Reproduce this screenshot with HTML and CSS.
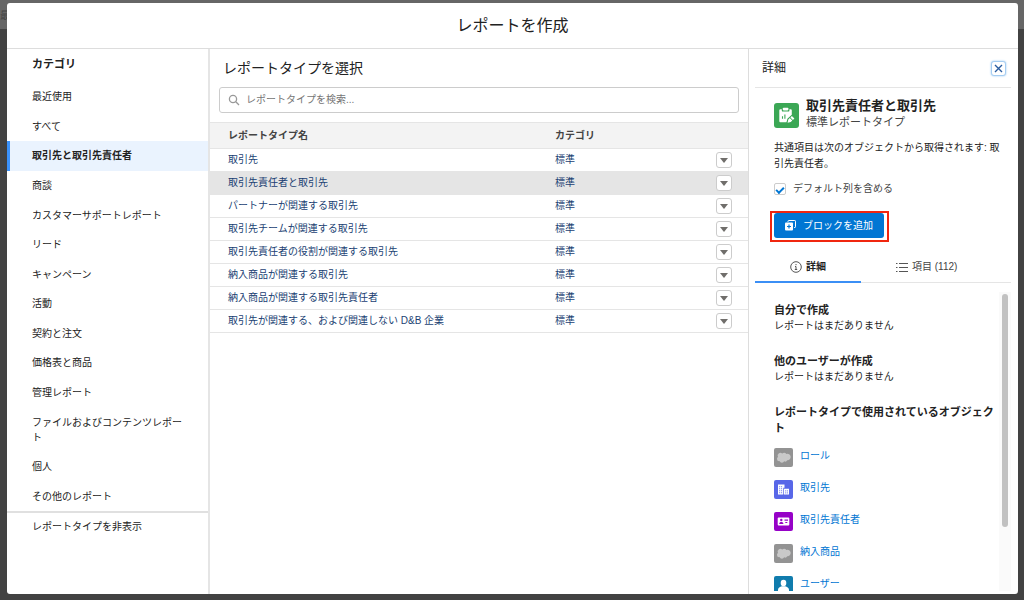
FILE: index.html
```html
<!DOCTYPE html>
<html lang="ja">
  <head>
    <meta charset="utf-8">
    <meta name="viewport" content="width=device-width, initial-scale=1.0">
    <title>レポートを作成</title>
    <link rel="stylesheet" href="styles.css">
  </head>
  <body>
    <svg class="sprite" aria-hidden="true">
      <symbol id="cloud" viewBox="0 0 19 19">
        <path d="M8.200 5.600a3 3 0 0 1 4.200.4 3.200 3.200 0 1 1 .8 6.200 2.200 2.200 0 0 1-3 1.100 2.500 2.500 0 0 1-4.600-.2 2.300 2.300 0 0 1-2.600-2.200 2.300 2.300 0 0 1 1-2A2.700 2.700 0 0 1 8.200 5.600z" fill="#c9c9c9"/>
      </symbol>
    </svg>

    <div class="backdrop-text" aria-hidden="true">最</div>

    <div class="modal" role="dialog" aria-labelledby="modalTitle">
      <header class="modal-header">
        <h1 id="modalTitle">レポートを作成</h1>
      </header>

      <div class="modal-body">
        <nav class="sidebar">
          <h2>カテゴリ</h2>
          <ul class="categories">
            <li><a href="#">最近使用</a></li>
            <li><a href="#">すべて</a></li>
            <li><a href="#" class="active">取引先と取引先責任者</a></li>
            <li><a href="#">商談</a></li>
            <li><a href="#">カスタマーサポートレポート</a></li>
            <li><a href="#">リード</a></li>
            <li><a href="#">キャンペーン</a></li>
            <li><a href="#">活動</a></li>
            <li><a href="#">契約と注文</a></li>
            <li><a href="#">価格表と商品</a></li>
            <li><a href="#">管理レポート</a></li>
            <li><a href="#">ファイルおよびコンテンツレポート</a></li>
            <li><a href="#">個人</a></li>
            <li><a href="#">その他のレポート</a></li>
          </ul>
          <div class="sidebar-footer"><a href="#">レポートタイプを非表示</a></div>
        </nav>

        <main class="types">
          <h2>レポートタイプを選択</h2>
          <label class="search">
            <svg width="12" height="12" viewBox="0 0 12 12" aria-hidden="true"><circle cx="5" cy="5" r="3.6"/><path d="M7.8 7.8 11 11"/></svg>
            <input type="search" placeholder="レポートタイプを検索..." aria-label="レポートタイプを検索">
          </label>
          <table>
            <thead>
              <tr><th>レポートタイプ名</th><th class="col-category">カテゴリ</th><th class="col-menu"></th></tr>
            </thead>
            <tbody>
              <tr><td><a href="#">取引先</a></td><td>標準</td><td><button class="menu" aria-label="メニュー"></button></td></tr>
              <tr class="selected"><td><a href="#">取引先責任者と取引先</a></td><td>標準</td><td><button class="menu" aria-label="メニュー"></button></td></tr>
              <tr><td><a href="#">パートナーが関連する取引先</a></td><td>標準</td><td><button class="menu" aria-label="メニュー"></button></td></tr>
              <tr><td><a href="#">取引先チームが関連する取引先</a></td><td>標準</td><td><button class="menu" aria-label="メニュー"></button></td></tr>
              <tr><td><a href="#">取引先責任者の役割が関連する取引先</a></td><td>標準</td><td><button class="menu" aria-label="メニュー"></button></td></tr>
              <tr><td><a href="#">納入商品が関連する取引先</a></td><td>標準</td><td><button class="menu" aria-label="メニュー"></button></td></tr>
              <tr><td><a href="#">納入商品が関連する取引先責任者</a></td><td>標準</td><td><button class="menu" aria-label="メニュー"></button></td></tr>
              <tr><td><a href="#">取引先が関連する、および関連しない D&amp;B 企業</a></td><td>標準</td><td><button class="menu" aria-label="メニュー"></button></td></tr>
            </tbody>
          </table>
        </main>

        <aside class="details">
          <div class="details-header">
            <h2>詳細</h2>
            <button class="close" aria-label="閉じる">
              <svg width="9" height="9" viewBox="0 0 9 9" aria-hidden="true"><path d="M1 1l7 7M8 1L1 8"/></svg>
            </button>
          </div>

          <div class="summary">
            <div class="type-title">
              <svg width="25" height="25" viewBox="0 0 25 25" aria-hidden="true">
                <rect width="25" height="25" rx="3" fill="#3ba755"/>
                <path d="M6.6 6.2h1.2v1.2c0 .8.5 1.2 1.2 1.2h5.2c.7 0 1.2-.4 1.2-1.2V6.2h1.1c.8 0 1.3.5 1.3 1.3v4.2l-4.4 4-.9 3.6H6.6c-.8 0-1.3-.5-1.3-1.3V7.5c0-.8.5-1.3 1.3-1.3z" fill="#fff"/>
                <rect x="8.8" y="4.8" width="5.6" height="2.6" rx=".8" fill="#fff"/>
                <path d="M8.5 15.8v-2.600M10.900 15.800v-4.300" stroke="#3ba755" stroke-width="1.1"/>
                <path d="M13.600 19.800l.7-3.200 1.500-1.500 2.500 2.500-1.500 1.500zM16.400 14.500l1.500-1.500 2.500 2.500-1.500 1.500z" fill="#fff"/>
              </svg>
              <div>
                <h3>取引先責任者と取引先</h3>
                <p>標準レポートタイプ</p>
              </div>
            </div>
            <p class="description">共通項目は次のオブジェクトから取得されます: 取引先責任者。</p>
            <label class="default-columns"><input type="checkbox" checked>デフォルト列を含める</label>
            <div class="highlight">
              <button class="add-block">
                <svg width="11" height="11" viewBox="0 0 11 11" aria-hidden="true">
                  <path d="M3 2V1.200Q3 .5 3.700.5h6.100q.7 0 .7.7v5.600q0 .7-.7.7H9" fill="none" stroke="#fff"/>
                  <rect y="2.5" width="8" height="8" rx="1" fill="#fff"/>
                  <path d="M4 4.500v4M2 6.500h4" stroke="#0176d3" stroke-width="1.2"/>
                </svg>
                ブロックを追加
              </button>
            </div>
          </div>

          <div class="tabs" role="tablist">
            <button class="tab active" role="tab" aria-selected="true">
              <svg width="12" height="12" viewBox="0 0 12 12" aria-hidden="true"><circle cx="6" cy="6" r="5.3"/><path d="M5 5.500h1v3M4.800 8.500h2.400M6 3v1.200"/></svg>
              詳細
            </button>
            <button class="tab" role="tab" aria-selected="false">
              <svg width="12" height="12" viewBox="0 0 12 12" aria-hidden="true"><path d="M0 2.500h1.500M3 2.500h9M0 6.500h1.500M3 6.500h9M0 10.500h1.500M3 10.500h9"/></svg>
              項目 (112)
            </button>
          </div>

          <div class="scroll">
            <div class="scroll-content">
              <section>
                <h4>自分で作成</h4>
                <p>レポートはまだありません</p>
              </section>
              <section>
                <h4>他のユーザーが作成</h4>
                <p>レポートはまだありません</p>
              </section>
              <section>
                <h4>レポートタイプで使用されているオブジェクト</h4>
                <ul class="objects">
                  <li>
                    <svg width="19" height="19" viewBox="0 0 19 19" aria-hidden="true"><rect width="19" height="19" rx="2" fill="#939393"/><use href="#cloud"/></svg>
                    <a href="#">ロール</a>
                  </li>
                  <li>
                    <svg width="19" height="19" viewBox="0 0 19 19" aria-hidden="true"><rect width="19" height="19" rx="2" fill="#5867e8"/><path d="M4 4.500h6.500v3.200H9.300v6.800H4zM10 8.800h5v5.700h-5z" fill="#fff"/><path d="M5.700 6v7.500M7.600 6v7.500M11.700 10.200v3.300M13.400 10.200v3.300" stroke="#5867e8" stroke-width=".7" stroke-dasharray="1.3 .7"/></svg>
                    <a href="#">取引先</a>
                  </li>
                  <li>
                    <svg width="19" height="19" viewBox="0 0 19 19" aria-hidden="true"><rect width="19" height="19" rx="2" fill="#9602c7"/><rect x="3.7" y="5.5" width="11.6" height="8" rx="1" fill="#fff"/><circle cx="7.3" cy="8" r="1.2" fill="#9602c7"/><path d="M5.200 12c0-1.500 1-1.900 2.100-1.900s2.100.4 2.100 1.900z" fill="#9602c7"/><path d="M10.500 8.200h3.500M11.300 10.500h2" stroke="#9602c7" stroke-width="1.2"/></svg>
                    <a href="#">取引先責任者</a>
                  </li>
                  <li>
                    <svg width="19" height="19" viewBox="0 0 19 19" aria-hidden="true"><rect width="19" height="19" rx="2" fill="#939393"/><use href="#cloud"/></svg>
                    <a href="#">納入商品</a>
                  </li>
                  <li>
                    <svg width="19" height="19" viewBox="0 0 19 19" aria-hidden="true"><rect width="19" height="19" rx="2" fill="#107cad"/><ellipse cx="9.5" cy="7" rx="2.8" ry="3.2" fill="#fff"/><path d="M4 15v-1.500c0-1.700 2-2.700 3.800-3.300h3.400c1.800.6 3.800 1.600 3.800 3.300V15z" fill="#fff"/></svg>
                    <a href="#">ユーザー</a>
                  </li>
                </ul>
              </section>
            </div>
            <div class="scrollbar"><div class="scrollbar-thumb"></div></div>
          </div>
        </aside>
      </div>
    </div>
  </body>
</html>
```

FILE: styles.css
```css
* {
  box-sizing: border-box;
}

body {
  display: flex;
  height: 100vh;
  margin: 0;
  padding: 3px 6px 6px 7px;
  background: linear-gradient(#666 29px, #424242 29px);
  color: #222;
  font-family: "Liberation Sans", "Noto Sans CJK JP", sans-serif;
  font-size: 10px;
  line-height: 16px;
}

h1, h2, h3, h4, p, ul {
  margin: 0;
  padding: 0;
}

ul {
  list-style: none;
}

a {
  color: inherit;
  text-decoration: none;
}

button, input {
  font: inherit;
  color: inherit;
}

button {
  padding: 0;
  cursor: pointer;
}

svg {
  flex: none;
}

.sprite {
  position: absolute;
  width: 0;
  height: 0;
}

/* Page heading behind the modal */
.backdrop-text {
  position: absolute;
  top: 8px;
  left: 0;
  color: #444;
}

/* ===== Modal ===== */
.modal {
  position: relative;
  display: flex;
  flex-direction: column;
  flex: 1;
  min-width: 0;
  background: #fff;
  border-radius: 3px;
  overflow: hidden;
}

.modal-header {
  padding: 10px;
  border-bottom: 1px solid #ddd;
  text-align: center;
}

.modal-header h1 {
  font-size: 16px;
  font-weight: 400;
  line-height: 25px;
}

.modal-body {
  display: grid;
  grid-template-columns: 203px 1fr 270px;
  flex: 1;
  min-height: 0;
}

/* ===== Categories ===== */
.sidebar {
  display: flex;
  flex-direction: column;
  border-right: 2px solid #e5e5e5;
}

.sidebar h2 {
  padding: 7px 25px 10px;
  font-size: 11px;
}

.categories {
  display: flex;
  flex-direction: column;
  flex: 1;
}

.categories li {
  display: flex;
  flex: 1 0 auto;
}

.categories a {
  display: flex;
  align-items: center;
  flex: 1;
  padding: 0 20px 0 22px;
  border-left: 3px solid transparent;
  line-height: 15px;
}

.categories a.active {
  border-left-color: #3b92fb;
  background: #eaf3fe;
  font-weight: 700;
}

.sidebar-footer {
  min-height: 83px;
  padding: 6px 25px;
  border-top: 2px solid #e0e0e0;
}

/* ===== Report types ===== */
.types h2 {
  padding: 7px 13px;
  font-size: 14px;
  font-weight: 400;
  line-height: 24px;
}

.search {
  display: flex;
  align-items: center;
  gap: 6px;
  height: 26px;
  margin: 0 9px 9px;
  padding: 0 8px;
  border: 1px solid #ccc;
  border-radius: 3px;
}

.search svg {
  fill: none;
  stroke: #999;
  stroke-width: 1.3;
}

.search input {
  flex: 1;
  padding: 0;
  border: 0;
  outline: 0;
  background: none;
}

.search input::placeholder {
  color: #757575;
}

table {
  width: 100%;
  border-collapse: collapse;
  table-layout: fixed;
}

th, td {
  height: 23px;
  padding: 0 0 0 18px;
  border-bottom: 1px solid #e5e5e5;
  text-align: left;
}

th {
  height: 26px;
  border-top: 1px solid #e5e5e5;
  background: #f3f3f3;
  color: #444;
}

td {
  color: #1b3f73;
}

.col-category {
  width: 169px;
}

.col-menu {
  width: 42px;
}

td:nth-child(3) {
  padding-left: 10px;
}

.selected td {
  background: #e5e5e5;
}

.menu {
  display: flex;
  align-items: center;
  justify-content: center;
  width: 16px;
  height: 16px;
  border: 1px solid #ccc;
  border-radius: 3px;
  background: #fff;
}

.menu::after {
  content: "";
  border: 4px solid transparent;
  border-top: 5px solid #706e6b;
  border-bottom: 0;
}

/* ===== Details ===== */
.details {
  display: flex;
  flex-direction: column;
  min-height: 0;
  padding: 0 7px 3px 6px;
  border-left: 1px solid #ddd;
}

.details-header {
  display: flex;
  align-items: center;
  justify-content: space-between;
  height: 39px;
  padding: 0 5px 0 7px;
  border-bottom: 1px solid #e5e5e5;
}

.details-header h2 {
  font-size: 12px;
  font-weight: 400;
}

.close {
  display: flex;
  align-items: center;
  justify-content: center;
  width: 15px;
  height: 15px;
  border: 1px solid #a5cdf2;
  border-radius: 3px;
  background: #fff;
  box-shadow: 0 0 2px #8fc1ee;
}

.close svg {
  fill: none;
  stroke: #2a5c9f;
  stroke-width: 1.4;
}

.summary {
  padding: 10px 4px 0 19px;
}

.type-title {
  display: flex;
  align-items: center;
  gap: 7px;
}

.type-title svg {
  margin-top: 2px;
}

.type-title h3 {
  font-size: 13px;
}

.type-title p {
  font-size: 11px;
  color: #444;
}

.description {
  margin-top: 10px;
}

.default-columns {
  display: flex;
  align-items: center;
  gap: 7px;
  margin-top: 9px;
  color: #444;
}

.default-columns input {
  display: flex;
  align-items: center;
  justify-content: center;
  appearance: none;
  width: 12px;
  height: 12px;
  margin: 0;
  border: 1px solid #ccc;
  border-radius: 2px;
}

.default-columns input:checked::after {
  content: "";
  width: 6px;
  height: 3px;
  border: solid #0176d3;
  border-width: 0 0 2px 2px;
  transform: rotate(-45deg);
}

.highlight {
  width: fit-content;
  margin: 14px 0 0 -4px;
  padding: 0 3px 2px 2px;
  border: 2px solid #f0260f;
}

.add-block {
  display: flex;
  align-items: center;
  justify-content: center;
  gap: 7px;
  width: 110px;
  height: 25px;
  border: 0;
  border-radius: 3px;
  background: #0176d3;
  color: #fff;
}

.tabs {
  display: flex;
  height: 30px;
  margin-top: 11px;
  border-bottom: 1px solid #e5e5e5;
}

.tab {
  display: flex;
  align-items: center;
  gap: 4px;
  height: 30px;
  padding: 0 35px;
  border: 0;
  border-bottom: 2px solid transparent;
  background: none;
  color: #444;
}

.tab.active {
  border-bottom-color: #3b8ff5;
  color: #222;
  font-weight: 700;
}

.tab svg {
  fill: none;
  stroke: #555;
}

.scroll {
  display: flex;
  flex: 1;
  min-height: 0;
  margin-top: 9px;
}

.scroll-content {
  flex: 1;
  padding: 10px 2px 0 19px;
  overflow-y: auto;
  scrollbar-width: none;
}

.scroll-content section {
  margin-bottom: 19px;
}

.scroll-content h4 {
  font-size: 11px;
}

.scrollbar {
  width: 12px;
  padding: 2px 3px;
  background: #fafafa;
}

.scrollbar-thumb {
  height: 79%;
  border-radius: 4px;
  background: #c1c1c1;
}

.objects {
  display: flex;
  flex-direction: column;
  gap: 13px;
  margin-top: 12px;
}

.objects li {
  display: flex;
  gap: 7px;
  height: 19px;
}

.objects a {
  color: #0176d3;
}
```
